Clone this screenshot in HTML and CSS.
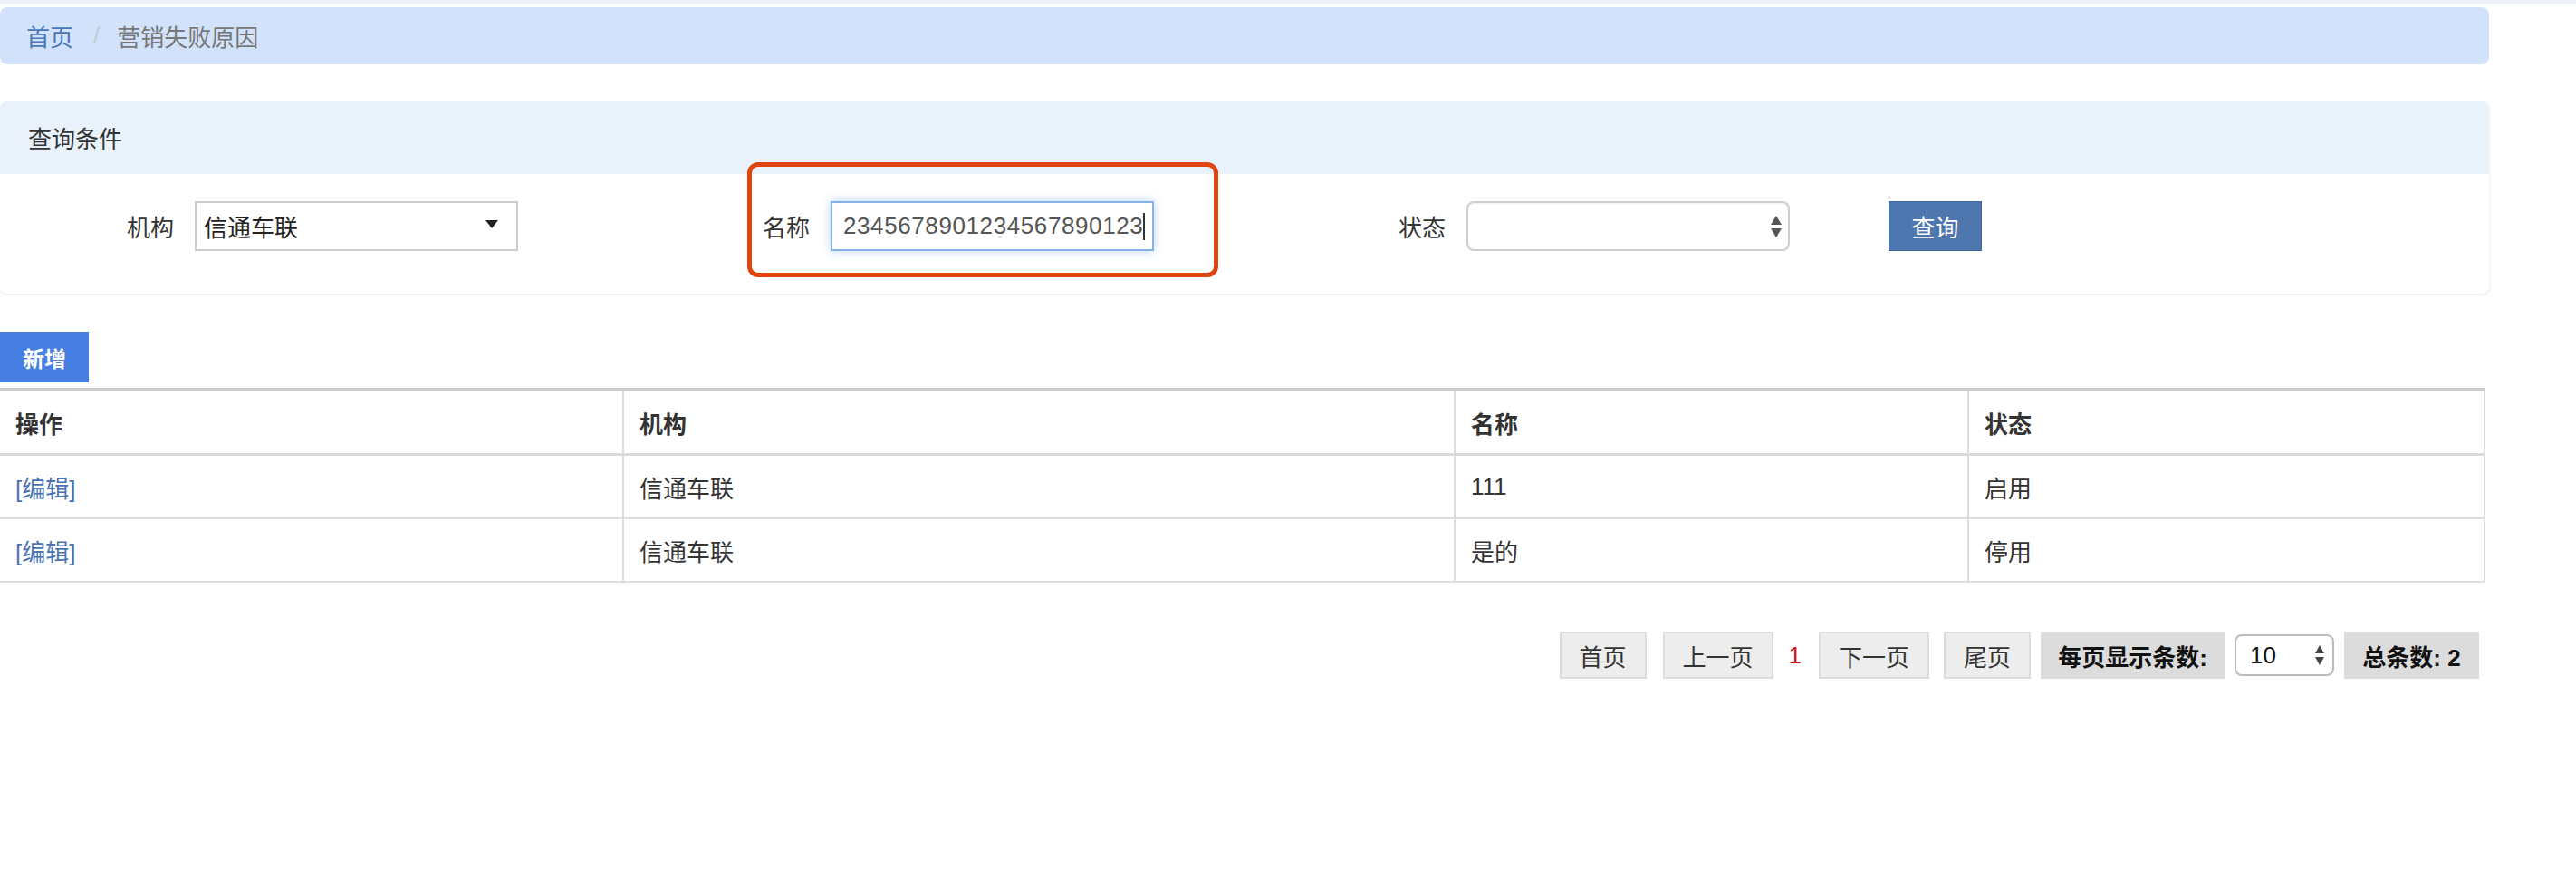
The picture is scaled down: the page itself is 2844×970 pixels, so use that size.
FILE: index.html
```html
<!DOCTYPE html>
<html lang="zh-CN">
<head>
    <meta charset="UTF-8">
    <title>营销失败原因</title>
    <link rel="stylesheet" href="styles.css">
</head>
<body>

    <div class="top-strip"></div>

    <!-- breadcrumb -->
    <div class="breadcrumb">
        <a class="crumb-link" href="#">首页</a>
        <span class="crumb-sep">/</span>
        <span class="crumb-current">营销失败原因</span>
    </div>

    <!-- query conditions -->
    <div class="query-panel">
        <div class="query-head">查询条件</div>
        <div class="query-body">
            <div class="field">
                <label class="field-label">机构</label>
                <div class="fake-select">
                    <span>信通车联</span>
                    <span class="caret"></span>
                </div>
            </div>
            <div class="field">
                <label class="field-label">名称</label>
                <div class="text-input">2345678901234567890123<span class="cursor"></span></div>
            </div>
            <div class="field field-last">
                <label class="field-label">状态</label>
                <div class="native-select">
                    <svg class="spin" width="14" height="26" viewBox="0 0 14 26">
                        <path d="M7 1 L13 11 L1 11 Z" fill="#555"/>
                        <path d="M1 15 L13 15 L7 25 Z" fill="#555"/>
                    </svg>
                </div>
            </div>
            <button class="btn-query">查询</button>
        </div>
        <div class="highlight"></div>
    </div>

    <button class="btn-add">新增</button>

    <table class="grid">
        <thead>
            <tr>
                <th class="col-op">操作</th>
                <th class="col-org">机构</th>
                <th class="col-name">名称</th>
                <th class="col-state">状态</th>
            </tr>
        </thead>
        <tbody>
            <tr>
                <td><a href="#">[编辑]</a></td>
                <td>信通车联</td>
                <td>111</td>
                <td>启用</td>
            </tr>
            <tr>
                <td><a href="#">[编辑]</a></td>
                <td>信通车联</td>
                <td>是的</td>
                <td>停用</td>
            </tr>
        </tbody>
    </table>

    <!-- pager -->
    <div class="pager">
        <span class="pg-btn pg-first">首页</span>
        <span class="pg-btn pg-prev">上一页</span>
        <span class="pg-cur">1</span>
        <span class="pg-btn pg-next">下一页</span>
        <span class="pg-btn pg-last">尾页</span>
        <span class="pg-info pg-size-label">每页显示条数:</span>
        <div class="pg-select">
            <span>10</span>
            <svg width="12" height="26" viewBox="0 0 12 26">
                <path d="M6 2 L11 11 L1 11 Z" fill="#444"/>
                <path d="M1 15 L11 15 L6 24 Z" fill="#444"/>
            </svg>
        </div>
        <span class="pg-info pg-total">总条数: 2</span>
    </div>

</body>
</html>
```
FILE: styles.css
```css
body {
    margin: 0;
    font-family: "Liberation Sans", "Noto Sans CJK SC", sans-serif;
    font-size: 26px;
    color: #333;
    background: #fff;
}
a {
    text-decoration: none;
}
.top-strip {
    height: 4px;
    background: #eef2f7;
    margin-bottom: 4px;
}
.breadcrumb {
    width: 2748px;
    height: 63px;
    box-sizing: border-box;
    background: #d1e2fa;
    border-radius: 8px;
    display: flex;
    align-items: center;
    padding-left: 29px;
}
.crumb-link {
    color: #4a78b7;
}
.crumb-sep {
    color: #c4ccd6;
    margin: 0 19px 0 22px;
}
.crumb-current {
    color: #777;
}

.query-panel {
    position: relative;
    width: 2748px;
    margin-top: 41px;
    border-radius: 8px;
    background: #fff;
    box-shadow: 0 2px 3px rgba(40, 70, 110, 0.08), 1px 0 2px rgba(40, 70, 110, 0.05);
}
.query-head {
    height: 80px;
    box-sizing: border-box;
    padding: 21px 0 0 31px;
    background: #e9f1fb;
    border-radius: 8px 8px 0 0;
    color: #333;
}
.query-body {
    height: 132px;
    box-sizing: border-box;
    padding-top: 30px;
    display: flex;
    align-items: flex-start;
}
.field {
    width: 702px;
    display: flex;
    align-items: center;
    height: 55px;
}
.field-last {
    width: auto;
}
.field-label {
    width: 192px;
    text-align: right;
    margin-right: 23px;
    color: #333;
}
.fake-select {
    width: 357px;
    height: 55px;
    box-sizing: border-box;
    border: 2px solid #ccc;
    display: flex;
    align-items: center;
    justify-content: space-between;
    padding: 0 20px 0 8px;
    color: #222;
}
.caret {
    width: 0;
    height: 0;
    border-left: 7px solid transparent;
    border-right: 7px solid transparent;
    border-top: 9px solid #222;
    margin-bottom: 4px;
}
.text-input {
    width: 357px;
    height: 55px;
    box-sizing: border-box;
    border: 2px solid #86b2e8;
    box-shadow: 0 0 10px rgba(102, 160, 233, 0.45);
    display: flex;
    align-items: center;
    padding-left: 12px;
    color: #555;
    letter-spacing: 0.6px;
    white-space: nowrap;
}
.cursor {
    display: inline-block;
    width: 2px;
    height: 30px;
    background: #333;
}
.native-select {
    width: 357px;
    height: 55px;
    box-sizing: border-box;
    border: 2px solid #cfcfcf;
    border-radius: 8px;
    box-shadow: inset 0 1px 2px rgba(0, 0, 0, 0.06);
    display: flex;
    align-items: center;
    justify-content: flex-end;
    padding-right: 6px;
}
.btn-query {
    margin-left: 109px;
    width: 103px;
    height: 55px;
    border: 1px solid #3f66a0;
    background: #4e77b0;
    color: #fff;
    font: inherit;
    padding: 0;
}
.highlight {
    position: absolute;
    left: 825px;
    top: 67px;
    width: 520px;
    height: 127px;
    box-sizing: border-box;
    border: 5px solid #e0450f;
    border-radius: 12px;
}

.btn-add {
    display: block;
    margin-top: 42px;
    width: 98px;
    height: 56px;
    border: none;
    background: #477ee1;
    color: #fff;
    font: inherit;
    font-size: 24px;
    font-weight: bold;
    padding: 0;
}

.grid {
    margin-top: 6px;
    width: 2744px;
    border-collapse: collapse;
    border-top: 4px solid #cacaca;
}
.grid th,
.grid td {
    text-align: left;
    padding: 0 0 0 17px;
    border: 2px solid #dedede;
    border-top: none;
}
.grid th:first-child,
.grid td:first-child {
    border-left: none;
}
.grid th {
    height: 68px;
    font-weight: bold;
    color: #333;
    border-bottom: 3px solid #dadada;
}
.grid td {
    height: 68px;
    color: #333;
}
.grid td a {
    color: #4a72b2;
}
.col-op { width: 670px; }
.col-org { width: 899px; }
.col-name { width: 548px; }

.pager {
    width: 2737px;
    margin-top: 54px;
    display: flex;
    justify-content: flex-end;
    align-items: center;
}
.pg-btn {
    height: 52px;
    box-sizing: border-box;
    border: 2px solid #dcdcdc;
    background: #ededed;
    display: flex;
    align-items: center;
    justify-content: center;
    color: #333;
}
.pg-first { width: 96px; }
.pg-prev { width: 122px; margin-left: 18px; }
.pg-cur { color: #c8161d; margin: 0 19px 0 17px; }
.pg-next { width: 122px; }
.pg-last { width: 96px; margin-left: 16px; }
.pg-info {
    height: 52px;
    background: #dcdcdc;
    display: flex;
    align-items: center;
    justify-content: center;
    font-weight: bold;
    color: #111;
}
.pg-size-label { width: 203px; margin-left: 11px; }
.pg-total { width: 149px; margin-left: 11px; }
.pg-select {
    width: 110px;
    height: 46px;
    box-sizing: border-box;
    margin-left: 11px;
    border: 2px solid #bbb;
    border-radius: 8px;
    display: flex;
    align-items: center;
    justify-content: space-between;
    padding: 0 8px 0 15px;
    color: #111;
}
```
